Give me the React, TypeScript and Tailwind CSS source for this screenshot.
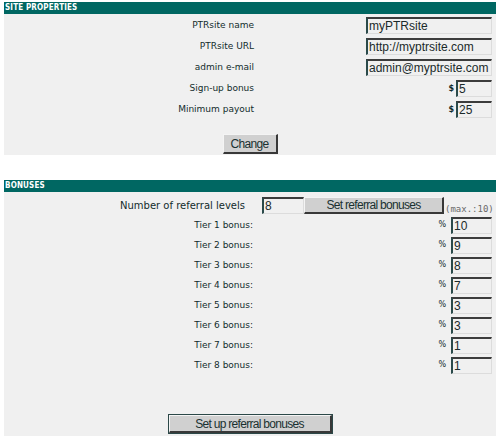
import React from "react";

const labelBase =
  "font-['DejaVu_Sans',sans-serif] leading-none text-[#122c2c] whitespace-nowrap";
const labelCls = `${labelBase} text-[9px]`;

function Field({ value, w }: { value: string; w: string }) {
  return (
    <div
      className={`h-[17px] ${w} shrink-0 bg-[#f0f0f0] border-t-2 border-l-2 border-t-[#3c3c3c] border-l-[#2a4a4a] border-b border-r border-b-[#dcdcdc] border-r-[#dcdcdc] flex items-center pl-[1px] font-['Liberation_Sans',sans-serif] text-[12px] leading-none text-[#1a2a2a] whitespace-nowrap overflow-hidden`}
    >
      {value}
    </div>
  );
}

function Header({ title }: { title: string }) {
  return (
    <div className="h-[12px] bg-[#006762] pl-[1px] flex items-center font-['DejaVu_Sans_Condensed','DejaVu_Sans',sans-serif] font-bold text-[8px] leading-none text-white tracking-[0.15px]">
      {title}
    </div>
  );
}

function SiteRow({ label, value, prefix }: { label: string; value: string; prefix?: string }) {
  return (
    <div className="h-[21px] flex items-center">
      <div className={`w-[250px] text-right ${labelCls}`}>{label}</div>
      <div className="flex-1 flex items-center justify-end pr-[4px]">
        {prefix ? (
          <>
            <span className={`${labelBase} text-[8px] mr-[2px] font-bold`}>{prefix}</span>
            <Field value={value} w="w-[36px]" />
          </>
        ) : (
          <Field value={value} w="w-[126px]" />
        )}
      </div>
    </div>
  );
}

function TierRow({ n, value }: { n: number; value: string }) {
  return (
    <div className="h-[20px] flex items-center">
      <div className={`w-[249px] text-right ${labelCls}`}>Tier {n} bonus:</div>
      <div className="flex-1 flex items-center justify-end pr-[4px]">
        <span className={`${labelBase} text-[8px] mr-[5px]`}>%</span>
        <Field value={value} w="w-[41px]" />
      </div>
    </div>
  );
}

const btnCls =
  "bg-[#d0d0d0] border-t border-l border-t-[#f4f4f4] border-l-[#f4f4f4] border-r-2 border-b-2 border-r-[#383838] border-b-[#383838] flex items-center justify-center font-['Liberation_Sans',sans-serif] text-[12px] leading-none text-[#1a3030] tracking-[-0.7px] whitespace-nowrap";

export default function App() {
  const tiers = ["10", "9", "8", "7", "3", "3", "1", "1"];
  return (
    <div className="w-[500px] h-[441px] bg-white pt-[2px] px-[4px]">
      <Header title="SITE PROPERTIES" />
      <div className="bg-[#f0f0f0] pt-[1px] pb-[1px]">
        <SiteRow label="PTRsite name" value="myPTRsite" />
        <SiteRow label="PTRsite URL" value="http://myptrsite.com" />
        <SiteRow label="admin e-mail" value="admin@myptrsite.com" />
        <SiteRow label="Sign-up bonus" value="5" prefix="$" />
        <SiteRow label="Minimum payout" value="25" prefix="$" />
        <div className="mt-[14px] flex justify-center">
          <div className={`${btnCls} w-[55px] h-[20px]`}>Change</div>
        </div>
      </div>

      <div className="mt-[25px]">
        <Header title="BONUSES" />
        <div className="bg-[#f0f0f0] pt-[4px] pb-[3px]">
          <div className="h-[19px] flex items-center">
            <div className={`w-[241px] text-right ${labelBase} text-[10px]`}>Number of referral levels</div>
            <div className="ml-[17px]">
              <Field value="8" w="w-[42px]" />
            </div>
            <div className={`${btnCls} w-[140px] h-[17px]`}>Set referral bonuses</div>
            <div className="self-end mb-[1px] ml-[1px] font-['DejaVu_Sans_Mono',monospace] text-[9px] leading-none text-[#6a6a6a] whitespace-nowrap">
              (max.:10)
            </div>
          </div>
          {tiers.map((v, i) => (
            <TierRow key={i} n={i + 1} value={v} />
          ))}
          <div className="mt-[40px] flex justify-center">
            <div className="outline outline-1 outline-[#2c4848]">
              <div className={`${btnCls} w-[163px] h-[18px]`}>Set up referral bonuses</div>
            </div>
          </div>
        </div>
      </div>
    </div>
  );
}
